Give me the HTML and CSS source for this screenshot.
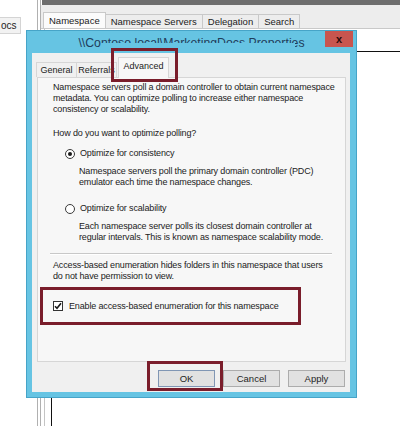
FILE: index.html
```html
<!DOCTYPE html>
<html lang="en">
<head>
  <meta charset="UTF-8" />
  <title>MarketingDocs Properties</title>
  <link rel="stylesheet" href="styles.css">
</head>
<body>
  <div class="screen">

    <!-- tree item of the console, mostly off screen -->
    <div class="tree-item">ocs</div>

    <!-- DFS Management console behind the dialog -->
    <div class="console">
      <div class="console-frame">
        <div class="console-title"></div>
        <div class="console-tabs">
          <div class="ctab active">Namespace</div>
          <div class="ctab">Namespace Servers</div>
          <div class="ctab">Delegation</div>
          <div class="ctab">Search</div>
        </div>
        <div class="console-body">
          <div class="nav-pane">
            <div class="list"></div>
          </div>
        </div>
      </div>
    </div>

    <!-- Properties dialog -->
    <div class="dialog">
      <div class="titlebar">
        <span class="title">\\Contoso.local\MarketingDocs Properties</span>
        <span class="title-mask"></span>
        <button class="close">x</button>
      </div>

      <div class="client">
        <div class="tabs">
          <div class="tab tab-general">General</div>
          <div class="tab tab-referrals">Referrals</div>
          <div class="tab tab-advanced active">Advanced</div>
        </div>

        <div class="panel">
          <p>Namespace servers poll a domain controller to obtain current namespace<br>metadata. You can optimize polling to increase either namespace<br>consistency or scalability.</p>

          <p class="question">How do you want to optimize polling?</p>

          <label class="option"><span class="radio checked"></span>Optimize for consistency</label>
          <p class="option-desc">Namespace servers poll the primary domain controller (PDC)<br>emulator each time the namespace changes.</p>

          <label class="option option-second"><span class="radio"></span>Optimize for scalability</label>
          <p class="option-desc">Each namespace server polls its closest domain controller at<br>regular intervals. This is known as namespace scalability mode.</p>

          <div class="separator"></div>

          <p class="abe-text">Access-based enumeration hides folders in this namespace that users<br>do not have permission to view.</p>

          <div class="abe-box">
            <label class="check">
              <span class="checkbox">
                <svg width="8" height="8" viewBox="0 0 8 8"><path d="M1 4.2 L3 6.3 L7 1.2" fill="none" stroke="#1a1a1a" stroke-width="1.6"/></svg>
              </span>
              Enable access-based enumeration for this namespace
            </label>
          </div>
        </div>

        <div class="buttons">
          <button class="btn default">OK</button>
          <button class="btn">Cancel</button>
          <button class="btn">Apply</button>
        </div>
      </div>

      <!-- red highlight marks -->
      <div class="mark mark-tab"></div>
      <div class="mark mark-ok"></div>
    </div>

  </div>
</body>
</html>
```

FILE: styles.css
```css
* {
  box-sizing: border-box;
}

body {
  margin: 0;
  background: #fff;
  font-family: "Liberation Sans", Arial, sans-serif;
  font-size: 9px;
  color: #222;
}

p {
  margin: 0;
}

.screen {
  position: relative;
  width: 400px;
  height: 426px;
  overflow: hidden;
}

/* left tree fragment */
.tree-item {
  position: absolute;
  left: -5px;
  top: 17px;
  padding: 2px 3px 2px 5px;
  border: 1px solid #d4d4d4;
  background: #f2f2f2;
  font-size: 10px;
  line-height: 11px;
}

/* background console window */
.console {
  position: absolute;
  left: 37px;
  top: 0;
  right: 0;
  bottom: 0;
  border-left: 1px solid #b0b0b0;
  padding-left: 2px;
}

.console-frame {
  height: 100%;
  border-left: 1px solid #b0b0b0;
  display: flex;
  flex-direction: column;
}

.console-title {
  height: 5px;
  margin-left: 1px;
  background: #6e6e6e;
}

.console-tabs {
  display: flex;
  align-items: flex-end;
  height: 24px;
  padding-left: 2px;
  background: #ededed;
  border-bottom: 1px solid #c9c9c9;
}

.ctab {
  height: 14px;
  padding: 0 5px;
  margin-right: -1px;
  border: 1px solid #c9c9c9;
  border-bottom: none;
  background: #ededed;
  font-size: 9.5px;
  line-height: 13px;
}

.ctab.active {
  height: 16px;
  background: #fbfbfb;
  line-height: 15px;
}

.console-body {
  flex: 1;
  background: #fff;
  padding-left: 3px;
}

.nav-pane {
  height: 100%;
  border-left: 1px solid #c4c4c4;
  padding: 22px 0 0 6px;
}

.list {
  height: 100%;
  border-top: 1px solid #111;
  border-left: 1px solid #111;
}

/* dialog */
.dialog {
  position: absolute;
  left: 26px;
  top: 30px;
  width: 331px;
  height: 368px;
  background: #66c4e3;
  border: 1px solid #46a4c8;
  display: flex;
  flex-direction: column;
}

.titlebar {
  position: relative;
  height: 22px;
  display: flex;
  align-items: center;
  justify-content: center;
}

.title {
  font-size: 12.3px;
  color: #1f3d5c;
  padding-top: 2px;
}

.title-mask {
  position: absolute;
  left: 74px;
  top: 12px;
  width: 194px;
  height: 9px;
  background: #66c4e3;
}

.close {
  position: absolute;
  right: 3px;
  top: 0;
  width: 28px;
  height: 16px;
  padding: 0;
  border: none;
  background: #c8554f;
  color: #2a0a0a;
  font-family: "Liberation Sans", Arial, sans-serif;
  font-weight: bold;
  font-size: 11px;
  line-height: 14px;
}

.client {
  flex: 1;
  margin: 0 6px 5px 5px;
  padding: 4px 4px 5px 4px;
  background: #f0f0f0;
  display: flex;
  flex-direction: column;
}

.tabs {
  position: relative;
  z-index: 1;
  display: flex;
  align-items: flex-end;
  height: 21px;
  margin-bottom: -1px;
}

.tab {
  height: 15px;
  margin-bottom: 1px;
  border: 1px solid #d6d6d6;
  border-bottom: none;
  background: #f0f0f0;
  text-align: center;
  line-height: 14px;
}

.tab-general {
  width: 41px;
}

.tab-referrals {
  width: 41px;
  margin-left: -1px;
}

.tab-advanced {
  width: 51px;
  margin-left: 1px;
}

.tab.active {
  height: 21px;
  margin-bottom: 0;
  background: #f7f7f7;
  line-height: 16px;
}

.panel {
  height: 285px;
  margin-left: 1px;
  border: 1px solid #d6d6d6;
  background: #f7f7f7;
  padding: 4px 0 0 15px;
  line-height: 11px;
  letter-spacing: -0.15px;
}

.question {
  margin-top: 13px;
}

.option {
  display: flex;
  align-items: center;
  height: 13px;
  margin-top: 8px;
  padding-left: 12px;
}

.option-second {
  margin-top: 14px;
}

.radio {
  width: 10px;
  height: 10px;
  margin-right: 5px;
  border: 1px solid #3a3a3a;
  border-radius: 50%;
  background: #fff;
  display: flex;
  align-items: center;
  justify-content: center;
}

.radio.checked::after {
  content: "";
  width: 4px;
  height: 4px;
  border-radius: 50%;
  background: #1a1a1a;
}

.option-desc {
  margin-top: 6px;
  padding-left: 26px;
}

.separator {
  width: 282px;
  margin: 10px 0 0 -3px;
  border-top: 1px solid #c8c8c8;
  border-bottom: 1px solid #fff;
}

.abe-text {
  margin-top: 5px;
}

.abe-box {
  width: 261px;
  height: 38px;
  margin: 5px 0 0 -13px;
  padding-left: 10px;
  border: 3px solid #7a1d2b;
  display: flex;
  align-items: center;
}

.check {
  display: flex;
  align-items: center;
}

.checkbox {
  width: 10px;
  height: 10px;
  margin-right: 6px;
  border: 1px solid #333;
  background: #fff;
  display: flex;
  align-items: center;
  justify-content: center;
}

.buttons {
  display: flex;
  justify-content: flex-end;
  gap: 8px;
  margin-top: 8px;
  padding-right: 1px;
}

.btn {
  width: 57px;
  height: 17px;
  padding: 0;
  border: 1px solid #acacac;
  background: #e1e1e1;
  font-family: "Liberation Sans", Arial, sans-serif;
  font-size: 9.5px;
  color: #1e1e1e;
}

.btn.default {
  border-color: #8096b4;
}

/* red annotation boxes */
.mark {
  position: absolute;
  border: 3px solid #7a1d2b;
  z-index: 2;
}

.mark-tab {
  left: 84px;
  top: 17px;
  width: 67px;
  height: 34px;
}

.mark-ok {
  left: 120px;
  top: 330px;
  width: 76px;
  height: 30px;
}
```
